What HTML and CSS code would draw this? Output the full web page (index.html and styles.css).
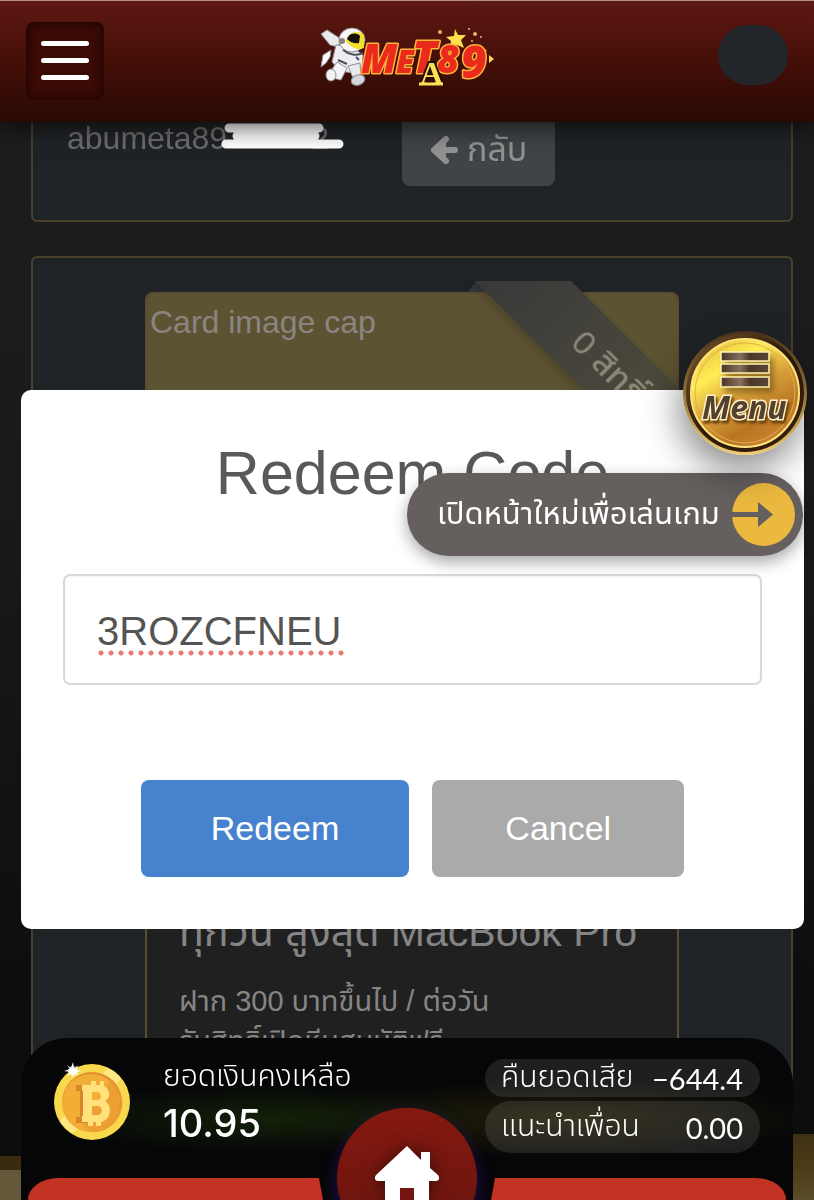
FILE: index.html
```html
<!DOCTYPE html>
<html lang="th">

<head>
    <meta charset="UTF-8">
    <meta name="viewport" content="width=device-width, initial-scale=1.0">
    <title>META89</title>
    <link rel="stylesheet" href="styles.css">
</head>

<body>
    <header class="topbar">
        <button class="hamburger" type="button" aria-label="menu">
            <span></span>
            <span></span>
            <span></span>
        </button>
        <a class="logo" href="#" aria-label="META89">
            <svg width="180" height="66" viewBox="0 0 180 66">
                <!-- astronaut -->
                <g stroke="#8d9098" stroke-width="1">
                    <path d="M4 8l6-4 14 9-3 8-8-2z" fill="#e9e9ee" />
                    <path d="M4 41l2-12 8-5-1 7-4 6z" fill="#fff" />
                    <path d="M19 19l15 1 12 9-1 13-9 5-13-2-8-9z" fill="#eeeef2" />
                    <path d="M20 36l10 6-6 12-9-2-2-6z" fill="#f4f4f6" />
                    <path d="M31 40l12-3 1 13-8 2z" fill="#e8e9ee" />
                    <ellipse cx="41" cy="54" rx="7" ry="5" fill="#d4d6dc" transform="rotate(-20 41 54)" />
                    <ellipse cx="14" cy="49" rx="5" ry="6" fill="#f2f2f4" />
                    <ellipse cx="35" cy="14" rx="13" ry="12" fill="#f7f7f8" />
                </g>
                <path d="M29 15c2-9 12-12 18-6l0 13c-6 3-13 0-18-7z" fill="#f2e02f" />
                <path d="M30 13c2-6 9-7 13-3l-1 7c-4 1-8 0-12-4z" fill="#15110c" />
                <circle cx="25" cy="15" r="3" fill="#8b8173" />
                <path d="M26 24c6 5 14 6 20 3M21 34l9 4M39 31l3 3" fill="none" stroke="#4c505b" stroke-width="2" />
                <!-- stars -->
                <path d="M138 3l3 6 8 0-5 5 3 8-7-3-7 4 1-8-5-4 8-1z" fill="#ffe04b" />
                <path d="M163 18l2 5 5 1-4 4-10 0-1-3 5-1zM172 29l5 4-5 4z" fill="#ffd84a" />
                <g fill="#f0b06c">
                    <circle cx="123" cy="6" r="2" />
                    <circle cx="152" cy="3" r="1" />
                    <circle cx="158" cy="8" r="2" />
                    <circle cx="164" cy="11" r="1" />
                    <circle cx="155" cy="15" r="1" />
                </g>
                <!-- wordmark -->
                <text y="47" font-family="Open Sans" font-weight="800" font-style="italic" class="wordmark"><tspan
                        x="44" font-size="40">M</tspan><tspan x="79" font-size="32">E</tspan><tspan x="95"
                        font-size="45">T</tspan><tspan x="120" font-size="38">8</tspan><tspan x="144" y="52"
                        font-size="44">9</tspan></text>
                <text x="103" y="58" font-family="Liberation Serif" font-weight="bold" font-size="32"
                    class="wordmark-a">A</text>
                <path d="M102 58h24" stroke="#ffdf55" stroke-width="3" />
            </svg>
        </a>
        <span class="avatar"></span>
    </header>

    <main class="page">
        <section class="panel account">
            <p class="username">abumeta89<span class="tail">2</span>
                <svg class="scribble" width="124" height="30" viewBox="0 0 124 30">
                    <path d="M8 6h90M16 14h78M5 22h113" fill="none" stroke="#fff" stroke-width="9"
                        stroke-linecap="round" />
                </svg>
            </p>
            <a class="back" href="#">
                <svg width="28" height="30" viewBox="0 0 28 30">
                    <path d="M16 4L4 15l12 11z" fill="#929293" />
                    <path d="M16 4L4 15l12 11M6 15h19" fill="none" stroke="#929293" stroke-width="6"
                        stroke-linecap="round" stroke-linejoin="round" />
                </svg>
                กลับ
            </a>
        </section>

        <section class="panel">
            <article class="card">
                <div class="ribbon"><span>0 สิทธิ์</span></div>
                <div class="card-image">Card image cap</div>
                <div class="card-body">
                    <h2>ทุกวัน สูงสุด MacBook Pro</h2>
                    <p>ฝาก 300 บาทขึ้นไป / ต่อวัน<br>รับสิทธิ์เปิดหีบสมบัติฟรี</p>
                </div>
            </article>
        </section>
    </main>

    <div class="overlay">
        <form class="modal" role="dialog" aria-labelledby="modal-title">
            <h1 id="modal-title"><label for="code">Redeem Code</label></h1>
            <div class="field">
                <input class="code" id="code" type="text" value="3ROZCFNEU" spellcheck="false">
            </div>
            <div class="actions">
                <button class="btn btn-redeem" type="button">Redeem</button>
                <button class="btn btn-cancel" type="button">Cancel</button>
            </div>
        </form>
    </div>

    <aside class="floating">
        <button class="menu-coin" type="button" aria-label="Menu">
            <svg width="124" height="124" viewBox="0 0 124 124">
                <defs>
                    <linearGradient id="rim" x1="0" y1="0" x2="0" y2="1">
                        <stop offset="0" stop-color="#49301a" />
                        <stop offset="0.5" stop-color="#8f7138" />
                        <stop offset="1" stop-color="#f0cc72" />
                    </linearGradient>
                    <linearGradient id="groove" x1="0" y1="0" x2="1" y2="1">
                        <stop offset="0" stop-color="#7b5a28" />
                        <stop offset="0.5" stop-color="#2a1808" />
                        <stop offset="1" stop-color="#3b210c" />
                    </linearGradient>
                    <linearGradient id="gold" x1="0.2" y1="0" x2="0.8" y2="1">
                        <stop offset="0" stop-color="#e8bd3c" />
                        <stop offset="0.25" stop-color="#ffee55" />
                        <stop offset="0.5" stop-color="#d9a03a" />
                        <stop offset="0.75" stop-color="#b97622" />
                        <stop offset="1" stop-color="#d08535" />
                    </linearGradient>
                    <linearGradient id="bar" x1="0" y1="0" x2="1" y2="0">
                        <stop offset="0" stop-color="#493528" />
                        <stop offset="0.4" stop-color="#88705d" />
                        <stop offset="0.6" stop-color="#4b3729" />
                        <stop offset="1" stop-color="#5b4536" />
                    </linearGradient>
                    <filter id="soft" x="-20%" y="-20%" width="140%" height="140%">
                        <feGaussianBlur stdDeviation="3" />
                    </filter>
                </defs>
                <circle cx="62" cy="62" r="62" fill="url(#rim)" />
                <circle cx="62" cy="62" r="59" fill="url(#groove)" />
                <circle cx="62" cy="62" r="54" fill="url(#gold)" stroke="#ffe380" stroke-width="2" />
                <circle cx="62" cy="62" r="50" fill="none" stroke="#e0b050" stroke-width="1" />
                <path d="M42 26h49v36H42z" fill="#6b4808" opacity="0.6" filter="url(#soft)" />
                <g fill="url(#bar)" stroke="#fff3b0" stroke-width="1.500">
                    <rect x="38" y="21" width="48" height="9" />
                    <rect x="38" y="33" width="48" height="9" />
                    <rect x="38" y="46" width="48" height="10" />
                </g>
                <text x="19" y="88" font-family="Open Sans" font-weight="bold" font-style="italic" font-size="32"
                    class="menu-word">Menu</text>
            </svg>
        </button>
        <a class="new-page" href="#">
            <span>เปิดหน้าใหม่เพื่อเล่นเกม</span>
            <svg width="63" height="63" viewBox="0 0 63 63">
                <circle cx="31.500" cy="31.500" r="31.500" fill="#ebb93f" />
                <path d="M0 29h26V19l15 12.500L26 44V34H0z" fill="#655f5e" />
            </svg>
        </a>
    </aside>

    <footer class="dock">
        <div class="wallet">
            <svg class="coin" width="78" height="82" viewBox="0 0 78 82">
                <circle cx="39" cy="43" r="38" fill="#f8d84c" />
                <path d="M55 9a38 38 0 0 1 13 11L20 74A38 38 0 0 1 7 62z" fill="#fff0a0" opacity="0.7" />
                <circle cx="39" cy="43" r="30" fill="#e39132" />
                <circle cx="38" cy="44" r="29" fill="#f2ad37" />
                <path d="M29 65l29-44a29 29 0 0 1-20 52z" fill="#e89730" opacity="0.6" />
                <path d="M23 26h13v38H23v-6h4V32h-4z" fill="#db8429" />
                <path fill="#ffe27a" fill-rule="evenodd"
                    d="M29 26h9v-4h5v4h4v-4h4v5c7 4 7 12 1 15 8 5 6 19-4 21v4h-5v-4h-3v4h-5v-4h-6v-6h1V32h-1zM39 33v8h5c5 0 5-8 0-8zM39 47v9h6c5 0 5-9 0-9z" />
                <circle cx="20" cy="12" r="5" fill="#fff" opacity="0.6" />
                <path d="M20 3l1 7 4-4-2 5 6 1-6 1 2 4-4-3-1 6-1-6-5 3 3-4-6-1 6-2-3-4 4 3z" fill="#fff" />
            </svg>
            <div class="balance">
                <span>ยอดเงินคงเหลือ</span>
                <strong>10.95</strong>
            </div>
            <dl class="stats">
                <div class="stat">
                    <dt>คืนยอดเสีย</dt>
                    <dd>−644.4</dd>
                </div>
                <div class="stat stat-tall">
                    <dt>แนะนำเพื่อน</dt>
                    <dd>0.00</dd>
                </div>
            </dl>
        </div>
        <nav class="tabs">
            <span class="tab tab-left"></span>
            <span class="tab tab-right"></span>
        </nav>
        <a class="home" href="#" aria-label="home">
            <svg width="68" height="56" viewBox="0 0 68 56">
                <path d="M34 2L3 31c-2 3-1 6 2 6h7v19h44V37h7c3 0 4-3 2-6l-8-7V8h-9v8z" fill="#fff" />
                <path d="M27 56V44h14v12z" fill="#75150f" />
            </svg>
        </a>
    </footer>
</body>

</html>
```

FILE: styles.css
```css
* {
    box-sizing: border-box;
}

body {
    margin: 0;
    height: 100vh;
    overflow: hidden;
    font-family: "Liberation Sans", "Noto Sans Thai", sans-serif;
    font-size: 32px;
    color: #858585;
    background: linear-gradient(#1e1e1e, #1a1a1a 40%, #0d0d0d 85%);
}

/* strip of the page art showing at the bottom */
body::before {
    content: "";
    position: fixed;
    left: 0;
    right: 0;
    bottom: 0;
    height: 66px;
    background:
        linear-gradient(transparent 22px, #3a2b10 22px, #3a2b10 36px, #64573a 36px) left / 50% 100% no-repeat,
        linear-gradient(#3f3013, #4d3c18 36px, #5a4c28) right / 50% 100% no-repeat;
}

h1,
h2,
p,
dl,
dd {
    margin: 0;
    font-weight: normal;
}

a {
    color: inherit;
    text-decoration: none;
}

button {
    border: 0;
    padding: 0;
    font: inherit;
    cursor: pointer;
}

svg {
    display: block;
    flex: none;
    overflow: visible;
}

/* Top bar */
.topbar {
    position: fixed;
    top: 0;
    left: 0;
    right: 0;
    z-index: 2;
    display: grid;
    grid-template-columns: 1fr auto 1fr;
    align-items: center;
    height: 122px;
    padding: 0 26px 2px;
    border-top: 1px solid #b08e8a;
    background: linear-gradient(#5e1812, #471009 45%, #290903);
    box-shadow: 0 4px 24px rgba(0, 0, 0, .7);
}

.hamburger {
    display: flex;
    flex-direction: column;
    justify-content: center;
    align-items: center;
    gap: 12px;
    width: 78px;
    height: 78px;
    border-radius: 8px;
    background: #3b0b06;
    box-shadow: inset 0 0 10px 2px #1f0402;
}

.hamburger span {
    width: 48px;
    height: 5px;
    border-radius: 3px;
    background: #fff;
}

.logo {
    margin-bottom: 4px;
}

.wordmark {
    fill: #ea2a1c;
    stroke: #ffb338;
    stroke-width: 3px;
    stroke-linejoin: round;
    paint-order: stroke;
}

.wordmark-a {
    fill: #ffdf55;
    stroke: #241006;
    stroke-width: 4px;
    paint-order: stroke;
}

.avatar {
    justify-self: end;
    width: 70px;
    height: 60px;
    margin-bottom: 12px;
    border-radius: 30px;
    background: #22262a;
}

/* Page behind the dialog */
.page {
    position: relative;
    display: flex;
    flex-direction: column;
    gap: 34px;
    padding: 78px 21px 0 31px;
}

.panel {
    padding: 34px;
    border: 2px solid #4a3f2a;
    border-radius: 6px;
    background: #202326;
}

.account {
    display: grid;
    grid-template-columns: 335px 1fr;
    align-items: start;
}

.username {
    position: relative;
    line-height: 48px;
    color: #6d6d6e;
}

.tail {
    margin-left: 84px;
}

.scribble {
    position: absolute;
    left: 154px;
    top: 8px;
}

.back {
    justify-self: start;
    display: flex;
    align-items: center;
    gap: 9px;
    height: 72px;
    padding: 0 28px;
    border-radius: 8px;
    font-size: 34px;
    color: #929293;
    background: #414447;
}

.card {
    position: relative;
    width: 534px;
    max-width: 100%;
    margin: 0 auto;
    border: 2px solid #5a4d30;
    border-radius: 8px;
    background: #202020;
}

.card-image {
    height: 560px;
    padding: 4px 3px;
    border-radius: 6px 6px 0 0;
    line-height: 48px;
    color: #8a8580;
    background: #5c5332;
}

.card-body {
    padding: 46px 32px;
}

.card-body h2 {
    font-size: 41px;
    line-height: 64px;
    white-space: nowrap;
}

.card-body p {
    font-size: 29px;
    line-height: 40px;
    margin-top: 17px;
}

.ribbon {
    position: absolute;
    top: -13px;
    right: -12px;
    width: 221px;
    height: 221px;
    overflow: hidden;
}

/* folded end of the ribbon */
.ribbon::before {
    content: "";
    position: absolute;
    left: 0;
    top: 0;
    width: 20px;
    height: 11px;
    background: #36373a;
    clip-path: polygon(8px 0, 100% 0, 100% 100%, 0 100%);
}

.ribbon span {
    position: absolute;
    left: -36px;
    top: 52px;
    width: 354px;
    height: 68px;
    line-height: 68px;
    text-align: center;
    font-size: 34px;
    font-weight: 500;
    color: #8d8778;
    background: linear-gradient(90deg, #36373a, #47453b 50%, #57513a);
    box-shadow: 0 4px 10px rgba(0, 0, 0, .2);
    transform: rotate(45deg);
}

/* Redeem dialog */
.overlay {
    position: fixed;
    inset: 0;
    z-index: 3;
    display: flex;
    align-items: center;
    padding: 119px 10px 0 21px;
}

.modal {
    flex: 1;
    padding: 42px 42px 52px;
    border-radius: 10px;
    text-align: center;
    color: #595959;
    background: #fff;
}

.modal h1 {
    font-size: 61px;
    line-height: 82px;
}

.field {
    position: relative;
    margin-top: 60px;
}

/* spelling mark under the code */
.field::after {
    content: "";
    position: absolute;
    left: 33px;
    top: 76px;
    width: 250px;
    height: 6px;
    background: radial-gradient(circle, #e8776f 2px, transparent 3px) 0 0 / 10px 6px;
}

.code {
    display: block;
    width: 100%;
    height: 111px;
    padding: 4px 32px 0;
    border: 2px solid #d9d9d9;
    border-radius: 7px;
    font: inherit;
    font-size: 40px;
    color: #545454;
    background: #fff;
    box-shadow: inset 0 1px 2px rgba(0, 0, 0, .06);
}

.actions {
    display: flex;
    justify-content: center;
    gap: 23px;
    margin-top: 95px;
}

.btn {
    min-width: 252px;
    height: 97px;
    padding: 0 70px;
    border-radius: 8px;
    font-size: 34px;
    color: #fff;
}

.btn-redeem {
    background: #4782ce;
}

.btn-cancel {
    background: #aaa;
}

/* Floating buttons */
.floating {
    position: fixed;
    top: 331px;
    right: 7px;
    z-index: 4;
    display: flex;
    flex-direction: column;
    align-items: flex-end;
    gap: 18px;
}

.menu-coin {
    position: relative;
    z-index: 1;
    border-radius: 50%;
    background: none;
    box-shadow: -4px 16px 36px rgba(0, 0, 0, .45);
}

.menu-word {
    fill: #54402f;
    stroke: #fff1c4;
    stroke-width: 3px;
    paint-order: stroke;
    filter: drop-shadow(2px 3px 1px #6b430c);
}

.new-page {
    display: flex;
    align-items: center;
    justify-content: space-between;
    width: 396px;
    height: 83px;
    margin-right: 4px;
    padding: 0 8px 0 30px;
    border-radius: 42px;
    font-size: 31px;
    white-space: nowrap;
    color: #fff;
    background: #655f5e;
    box-shadow: 0 6px 16px rgba(0, 0, 0, .35);
}

/* Bottom dock */
.dock {
    position: fixed;
    left: 21px;
    right: 21px;
    bottom: 0;
    z-index: 4;
    border-radius: 46px 46px 0 0;
    overflow: hidden;
    color: #fff;
    background:
        radial-gradient(ellipse at 32% 50%, rgba(22, 40, 8, .8), transparent 30%),
        radial-gradient(ellipse at 70% 50%, rgba(40, 36, 8, .8), transparent 35%),
        #060608;
}

.wallet {
    display: flex;
    align-items: flex-start;
    height: 140px;
    padding: 21px 33px 0 32px;
}

.balance {
    display: flex;
    flex-direction: column;
    margin-left: 32px;
    font-size: 30px;
    font-weight: 300;
    line-height: 34px;
    white-space: nowrap;
}

.balance strong {
    font-family: Inter, sans-serif;
    font-size: 38px;
    font-weight: 500;
    line-height: 60px;
}

.stats {
    display: flex;
    flex-direction: column;
    gap: 4px;
    width: 275px;
    margin-left: auto;
    font-weight: 300;
    font-size: 30px;
}

.stat {
    display: flex;
    justify-content: space-between;
    align-items: center;
    height: 38px;
    padding: 0 17px 0 16px;
    border-radius: 26px;
    white-space: nowrap;
    background: rgba(255, 255, 255, .1);
}

.stat dd {
    font-family: Lato, sans-serif;
    font-size: 29px;
}

.stat-tall {
    height: 52px;
}

.tabs {
    display: flex;
    justify-content: space-between;
    gap: 168px;
    height: 22px;
    padding: 0 7px;
}

.tab {
    flex: 1;
    background: #c23324;
}

.tab-left {
    border-top-left-radius: 30px 22px;
    clip-path: polygon(0 0, calc(100% - 4px) 0, 100% 100%, 0 100%);
}

.tab-right {
    border-top-right-radius: 30px 22px;
    clip-path: polygon(4px 0, 100% 0, 100% 100%, 0 100%);
}

.home {
    position: absolute;
    left: 50%;
    bottom: -48px;
    width: 140px;
    height: 140px;
    margin-left: -70px;
    padding-top: 36px;
    border-radius: 50%;
    background: linear-gradient(#84190f, #65150f);
    box-shadow: 0 6px 16px rgba(60, 20, 140, .6);
}

.home svg {
    margin: 0 auto;
    filter: drop-shadow(0 0 8px rgba(0, 0, 0, .5));
}
```
